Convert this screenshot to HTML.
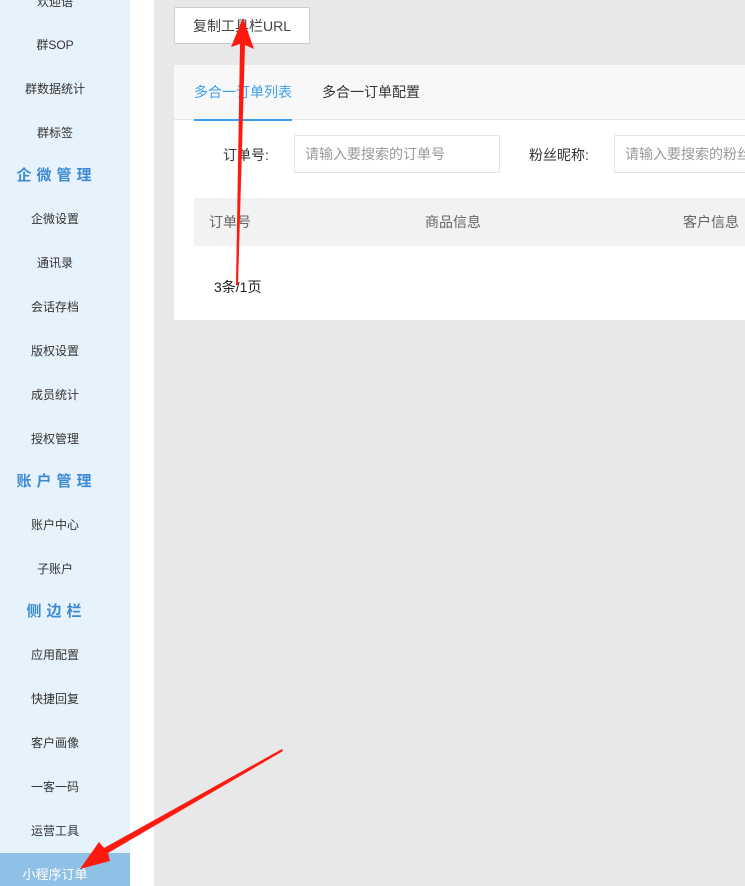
<!DOCTYPE html>
<html><head><meta charset="utf-8"><style>
*{margin:0;padding:0;box-sizing:border-box}
html,body{width:745px;height:886px;overflow:hidden}
body{background:#e8e8e8;font-family:"Liberation Sans","Noto Sans CJK SC",sans-serif;position:relative}
.side{position:absolute;left:0;top:0;width:130px;height:886px;background:#e6f2fc}
.strip{position:absolute;left:130px;top:0;width:24px;height:886px;background:#fff}
.it{position:absolute;left:0;width:110px;text-align:center;font-size:12px;color:#333;line-height:20px}
.hd{position:absolute;left:0;width:110px;text-align:center;font-size:15px;font-weight:bold;color:#3b8ad2;letter-spacing:5px;line-height:20px;padding-left:3px}
.sel{position:absolute;left:0;top:853px;width:130px;height:33px;background:#8fc1e6;color:#fff;font-size:13px;line-height:44px}
.sel span{display:block;width:110px;text-align:center}
.btn{position:absolute;left:174px;top:7px;width:136px;height:37px;background:#fff;border:1px solid #ccc;border-radius:2px;font-size:14px;color:#444;text-align:center;line-height:36px}
.card{position:absolute;left:174px;top:65px;width:580px;height:255px;background:#fff}
.tabs{height:55px;background:#f8f8f8;border-bottom:1px solid #e6e6e6;position:relative}
.tab{position:absolute;top:0;line-height:54px;font-size:14px;color:#333}
.t1{left:20px;color:#3a9ff2;height:55px;width:98px}
.ul{position:absolute;left:20px;top:54px;width:98px;height:2px;background:#3a9ff2}
.lbl{position:absolute;font-size:14px;color:#333;top:80px}
.inp{position:absolute;top:70px;height:38px;border:1px solid #e2e2e2;border-radius:2px;font-size:14px;color:#999;line-height:36px;padding-left:10px;white-space:nowrap;overflow:hidden}
.th{position:absolute;left:20px;top:133px;width:580px;height:48px;background:#f2f2f2;font-size:14px;color:#666}
.th span{position:absolute;top:14px}
</style></head><body>
<div class="side">
<div class="it" style="top:-8px">欢迎语</div>
<div class="it" style="top:35px">群SOP</div>
<div class="it" style="top:79px">群数据统计</div>
<div class="it" style="top:123px">群标签</div>
<div class="hd" style="top:166px">企微管理</div>
<div class="it" style="top:209px">企微设置</div>
<div class="it" style="top:253px">通讯录</div>
<div class="it" style="top:297px">会话存档</div>
<div class="it" style="top:341px">版权设置</div>
<div class="it" style="top:385px">成员统计</div>
<div class="it" style="top:429px">授权管理</div>
<div class="hd" style="top:472px">账户管理</div>
<div class="it" style="top:515px">账户中心</div>
<div class="it" style="top:559px">子账户</div>
<div class="hd" style="top:602px">侧边栏</div>
<div class="it" style="top:645px">应用配置</div>
<div class="it" style="top:689px">快捷回复</div>
<div class="it" style="top:733px">客户画像</div>
<div class="it" style="top:777px">一客一码</div>
<div class="it" style="top:821px">运营工具</div>
<div class="sel"><span>小程序订单</span></div>
</div>
<div class="strip"></div>
<div class="btn">复制工具栏URL</div>
<div class="card">
<div class="tabs"><div class="tab t1">多合一订单列表</div><div class="tab" style="left:148px">多合一订单配置</div><div class="ul"></div></div>
<div class="lbl" style="left:49px">订单号:</div>
<div class="inp" style="left:120px;width:206px">请输入要搜索的订单号</div>
<div class="lbl" style="left:355px">粉丝昵称:</div>
<div class="inp" style="left:440px;width:160px">请输入要搜索的粉丝昵称</div>
<div class="th"><span style="left:15px">订单号</span><span style="left:231px">商品信息</span><span style="left:489px">客户信息</span></div>
<div style="position:absolute;left:40px;top:212px;font-size:14px;color:#222">3条/1页</div>
</div>
<svg width="745" height="886" style="position:absolute;left:0;top:0">
<polygon points="236,285 238,285 245,45 254,49 243,18 231,47 240,44" fill="#ff1a10"/>
<polygon points="282,749 283,751 108,853 110,861 80,869 99,842 104,848" fill="#ff1a10"/>
</svg>
</body></html>
